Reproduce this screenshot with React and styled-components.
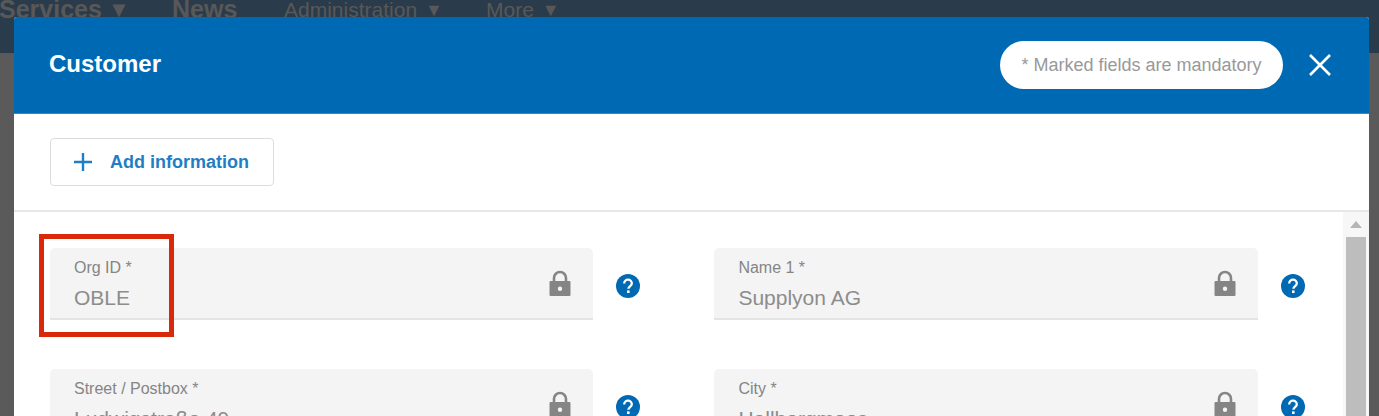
import React from "react";
import styled, { createGlobalStyle } from "styled-components";

const Global = createGlobalStyle`
  html, body { margin: 0; padding: 0; background: #5a5a5a; }
  body { font-family: "Liberation Sans", Arial, sans-serif; }
  * { box-sizing: border-box; }
`;

const Page = styled.div`
  position: relative;
  width: 1379px;
  height: 416px;
  overflow: hidden;
  background: #5a5a5a;
`;

const NavBar = styled.nav`
  height: 53px;
  background: #2a3c4b;
  display: flex;
  align-items: flex-start;
  color: #585858;
`;

const NavItem = styled.span`
  flex: none;
  width: ${(p) => p.$w}px;
  font-size: ${(p) => (p.$strong ? 25 : 21)}px;
  font-weight: ${(p) => (p.$strong ? 700 : 400)};
  line-height: 20px;
  margin-top: ${(p) => (p.$strong ? -1 : 0)}px;
  margin-left: ${(p) => p.$shift || 0}px;
  white-space: nowrap;
`;

const Caret = styled.span`
  font-size: ${(p) => (p.$strong ? 22 : 18)}px;
  margin-left: ${(p) => (p.$strong ? 6 : 8)}px;
  vertical-align: 1px;
`;

const Modal = styled.section`
  position: absolute;
  left: 14px;
  top: 17px;
  width: 1355px;
  height: 420px;
  background: #fff;
  border-radius: 3px 3px 0 0;
  display: flex;
  flex-direction: column;
  overflow: hidden;
`;

const Header = styled.header`
  flex: none;
  height: 97px;
  background: #0069b4;
  border-bottom: 1px solid #2f8ad0;
  display: flex;
  align-items: center;
  padding: 0 36px 0 35px;
`;

const Title = styled.h2`
  margin: -2px 0 0;
  flex: 1;
  color: #fff;
  font-size: 24px;
  font-weight: 700;
`;

const Mandatory = styled.div`
  width: 283px;
  height: 48px;
  border-radius: 24px;
  background: #fff;
  color: #999;
  font-size: 18px;
  line-height: 48px;
  text-align: center;
  white-space: nowrap;
`;

const Close = styled.button`
  border: 0;
  background: none;
  padding: 0;
  margin: 0 0 0 24px;
  width: 26px;
  height: 26px;
  display: flex;
  align-items: center;
  justify-content: center;
`;

const Toolbar = styled.div`
  flex: none;
  height: 98px;
  padding: 24px 36px 0;
  border-bottom: 2px solid #e8e8e8;
`;

const AddButton = styled.button`
  height: 48px;
  width: 224px;
  background: #fff;
  border: 1px solid #dcdcdc;
  border-radius: 4px;
  display: flex;
  align-items: center;
  gap: 17px;
  padding: 0 0 0 22px;
  color: #1f7ec4;
  font-family: "Liberation Sans", Arial, sans-serif;
  font-size: 18px;
  font-weight: 700;
`;

const Body = styled.div`
  flex: 1;
  display: flex;
  min-height: 0;
`;

const Form = styled.div`
  flex: 1;
  min-width: 0;
  padding: 36px 0 0 36px;
  display: grid;
  grid-template-columns: 664.4px 1fr;
  grid-auto-rows: 72px;
  row-gap: 49px;
`;

const FieldRow = styled.div`
  display: flex;
  align-items: center;
`;

const Field = styled.div`
  position: relative;
  flex: none;
  width: 543.4px;
  height: 72px;
  background: #f4f4f4;
  border-bottom: 2px solid #e4e4e4;
  border-radius: 5px 5px 0 0;
  padding: 10px 24px 0;
`;

const Label = styled.div`
  color: #858585;
  font-size: 16px;
  line-height: 20px;
`;

const Value = styled.div`
  color: #8c8c8c;
  font-size: 21px;
  line-height: 26px;
  margin-top: 7px;
`;

const LockSlot = styled.span`
  position: absolute;
  right: 22px;
  top: 22px;
  display: flex;
`;

const HelpSlot = styled.span`
  margin: 4px 0 0 23px;
  display: flex;
`;

const Scrollbar = styled.div`
  flex: none;
  width: 26px;
  background: #f7f7f7;
  display: flex;
  flex-direction: column;
  align-items: center;
  padding: 0 3px;
`;

const ArrowUp = styled.div`
  flex: none;
  height: 25px;
  display: flex;
  align-items: center;
  justify-content: center;
`;

const Thumb = styled.div`
  flex: 1;
  width: 20px;
  background: #bdbdbd;
`;

const Annotation = styled.div`
  position: absolute;
  left: 39px;
  top: 234px;
  width: 135px;
  height: 103px;
  border: 5px solid #d9290a;
  pointer-events: none;
`;

const Lock = () => (
  <svg width="22" height="27" viewBox="0 0 22 27">
    <path d="M5 12V8a6 6 0 0 1 12 0v4" fill="none" stroke="#858585" strokeWidth="2.6" />
    <path fillRule="evenodd" fill="#858585" d="M1.5 11h19a1 1 0 0 1 1 1v13a1 1 0 0 1-1 1h-19a1 1 0 0 1-1-1V12a1 1 0 0 1 1-1zM11 16.5a2.2 2.2 0 1 0 0 4.4 2.2 2.2 0 0 0 0-4.4z" />
  </svg>
);

const Help = () => (
  <svg width="24" height="24" viewBox="0 0 24 24">
    <circle cx="12" cy="12" r="12" fill="#0069b4" />
    <path d="M8.2 9.4a3.8 3.8 0 0 1 7.6 0c0 2.6-3.3 2.7-3.4 5.4" fill="none" stroke="#fff" strokeWidth="2.3" />
    <rect x="11" y="16.4" width="2.6" height="2.6" fill="#fff" />
  </svg>
);

const fields = [
  ["Org ID *", "OBLE"],
  ["Name 1 *", "Supplyon AG"],
  ["Street / Postbox *", "Ludwigstraße 49"],
  ["City *", "Hallbergmoos"],
];

export default function App() {
  return (
    <Page>
      <Global />
      <NavBar>
        <NavItem $w={172} $strong $shift={-1}>Services<Caret $strong>▼</Caret></NavItem>
        <NavItem $w={112} $strong $shift={1}>News</NavItem>
        <NavItem $w={202}>Administration<Caret>▼</Caret></NavItem>
        <NavItem $w={100}>More<Caret>▼</Caret></NavItem>
      </NavBar>
      <Modal>
        <Header>
          <Title>Customer</Title>
          <Mandatory>* Marked fields are mandatory</Mandatory>
          <Close aria-label="Close">
            <svg width="24" height="24" viewBox="0 0 24 24">
              <path d="M2 2l20 20M22 2L2 22" stroke="#fff" strokeWidth="2.6" fill="none" />
            </svg>
          </Close>
        </Header>
        <Toolbar>
          <AddButton>
            <svg width="20" height="20" viewBox="0 0 20 20">
              <path d="M10 1v18M1 10h18" stroke="#1f7ec4" strokeWidth="2.4" fill="none" />
            </svg>
            Add information
          </AddButton>
        </Toolbar>
        <Body>
          <Form>
            {fields.map(([label, value]) => (
              <FieldRow key={label}>
                <Field>
                  <Label>{label}</Label>
                  <Value>{value}</Value>
                  <LockSlot><Lock /></LockSlot>
                </Field>
                <HelpSlot><Help /></HelpSlot>
              </FieldRow>
            ))}
          </Form>
          <Scrollbar>
            <ArrowUp>
              <svg width="12" height="7" viewBox="0 0 12 7"><path d="M6 0l6 7H0z" fill="#b5b5b5" /></svg>
            </ArrowUp>
            <Thumb />
          </Scrollbar>
        </Body>
      </Modal>
      <Annotation />
    </Page>
  );
}
